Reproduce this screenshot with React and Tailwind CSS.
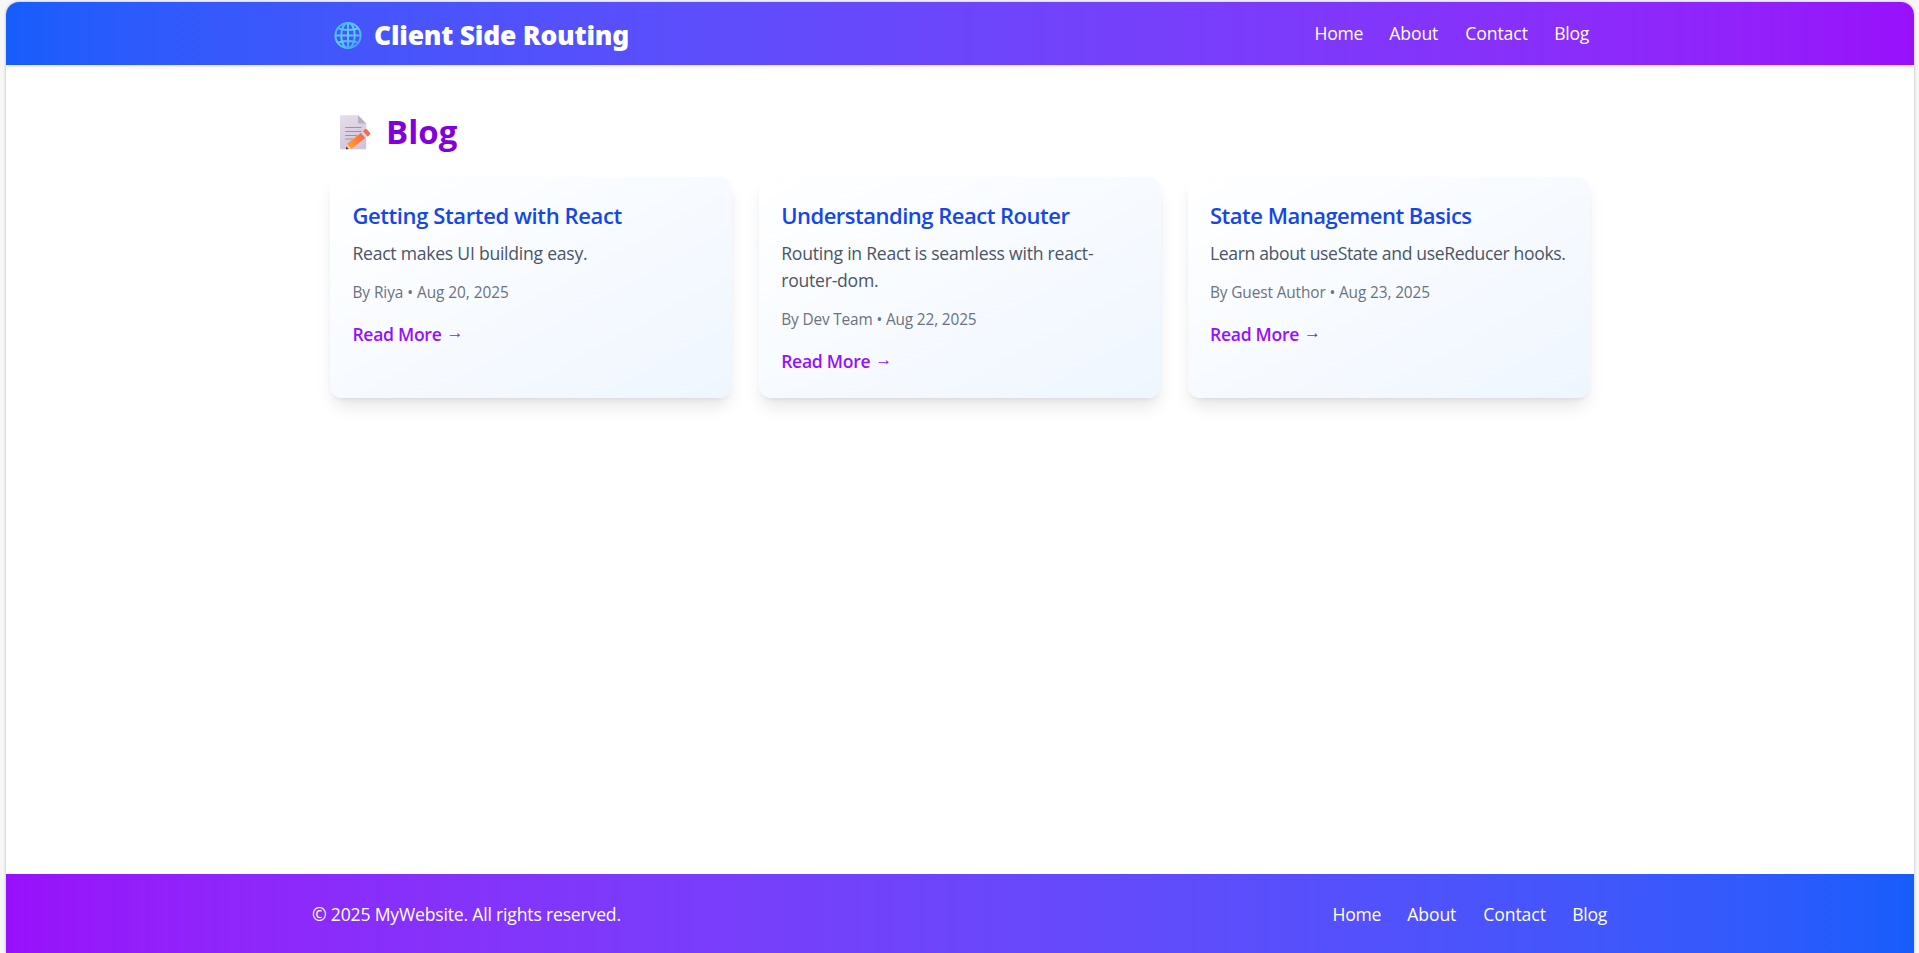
const posts = [
  {
    title: "Getting Started with React",
    titleClass: "tracking-[-0.39px]",
    text: "React makes UI building easy.",
    textClass: "tracking-[-0.25px]",
    meta: "By Riya • Aug 20, 2025",
    metaClass: "tracking-[-0.05px]",
  },
  {
    title: "Understanding React Router",
    titleClass: "tracking-[-0.5px]",
    text: "Routing in React is seamless with react-router-dom.",
    textClass: "tracking-[-0.24px]",
    meta: "By Dev Team • Aug 22, 2025",
    metaClass: "tracking-[-0.15px]",
  },
  {
    title: "State Management Basics",
    titleClass: "tracking-[-0.5px]",
    text: "Learn about useState and useReducer hooks.",
    textClass: "tracking-[-0.37px]",
    meta: "By Guest Author • Aug 23, 2025",
    metaClass: "tracking-[-0.12px]",
  },
];

function GlobeIcon() {
  return (
    <svg className="h-7 w-7 shrink-0" viewBox="0 0 28 28" fill="none">
      <defs>
        <linearGradient id="globe" x1="4" y1="3" x2="22" y2="25" gradientUnits="userSpaceOnUse">
          <stop stopColor="#45b5f5" />
          <stop offset="0.5" stopColor="#5fd0ff" />
          <stop offset="1" stopColor="#3fa4e8" />
        </linearGradient>
      </defs>
      <g stroke="url(#globe)" strokeWidth="2">
        <circle cx="14" cy="13.5" r="12.6" />
        <ellipse cx="14" cy="13.5" rx="6.8" ry="12.6" />
        <path d="M14.01 1 14 26M1.2 13.49 26.8 13.5M4 6.4c5.4 2 14.6 2 20 0M4 20.6c5.4-2 14.6-2 20 0" />
      </g>
    </svg>
  );
}

function MemoIcon() {
  return (
    <svg className="h-[35px] w-[31px] shrink-0" viewBox="0 0 31 35" fill="none">
      <defs>
        <linearGradient id="sheet" x1="4" y1="0" x2="22" y2="34" gradientUnits="userSpaceOnUse">
          <stop stopColor="#e5dcea" />
          <stop offset="1" stopColor="#cfc3d8" />
        </linearGradient>
        <linearGradient id="pencil" x1="9" y1="26" x2="24" y2="22" gradientUnits="userSpaceOnUse">
          <stop stopColor="#ff9838" />
          <stop offset="1" stopColor="#f8693c" />
        </linearGradient>
      </defs>
      <path d="M1.5 .3H18L26.2 8.5V32.7Q26.2 34.2 24.7 34.2H1.5Q0 34.2 0 32.7V1.8Q0 .3 1.5 .3Z" fill="url(#sheet)" />
      <path d="M18 .3 26.2 8.5H19.5Q18 8.5 18 7Z" fill="#baaec2" />
      <path d="M5.3 12.5H21.5M5.3 16.5H21.5M5.3 20.5H17M5.3 24H13" stroke="#9b93a2" strokeWidth="1.2" />
      <path d="M7 28.7 21.5 17.5 25.8 22.6 11.5 33.7 6.5 34Z" fill="url(#pencil)" />
      <path d="M7 28.7 11.5 33.7 6 34.3Z" fill="#f1c9a2" />
      <path d="M6.4 31.5 8.5 34 6 34.3Z" fill="#4a2038" />
      <path d="M21 18 23.5 15.9 27.8 21 25.3 23.1Z" fill="#ddd0ea" />
      <path d="M23 16.3 24.9 14.3Q26 13.2 27.1 14.4L29.9 17.7Q30.8 18.8 29.8 19.8L27.6 21.4Z" fill="#f8694f" />
    </svg>
  );
}

function NavLinks() {
  return (
    <ul className="flex text-[17.6px] leading-[26px] text-white">
      <li className="w-[74.7px] tracking-[-0.25px]"><a href="#home">Home</a></li>
      <li className="w-[76px] tracking-[-0.1px]"><a href="#about">About</a></li>
      <li className="w-[89px] tracking-[-0.08px]"><a href="#contact">Contact</a></li>
      <li className="w-[35.8px] tracking-[-0.3px]"><a href="#blog">Blog</a></li>
    </ul>
  );
}

function PostCard({ post }) {
  return (
    <article className="rounded-[13px] bg-linear-to-br from-white to-blue-50 px-[22.4px] pt-[23px] shadow-[0_11px_16.5px_-3.3px_rgb(0_0_0/0.1),0_4.4px_6.6px_-4.4px_rgb(0_0_0/0.1)]">
      <h2 className={`text-[22px] leading-[31px] font-semibold whitespace-nowrap text-blue-700 ${post.titleClass}`}>{post.title}</h2>
      <p className={`mt-[9px] text-[17.6px] leading-[27px] text-gray-600 ${post.textClass}`}>{post.text}</p>
      <p className={`mt-[15px] text-[15.4px] leading-[22px] text-gray-500 ${post.metaClass}`}>{post.meta}</p>
      <a href="#post" className="mt-[17px] flex gap-[5px] text-[17.6px] leading-[27px] font-semibold tracking-[-0.3px] text-purple-600">
        Read More
        <span className="font-['Liberation_Sans'] text-[17px] leading-[24px] font-normal">→</span>
      </a>
    </article>
  );
}

export default function App() {
  return (
    <div className="h-[953px] overflow-hidden bg-[#f7f7f7] pt-0.5 pr-[5px] pl-1.5 font-['Open_Sans','Noto_Sans',sans-serif]">
      <div className="flex h-[951px] flex-col overflow-hidden rounded-t-[13px] bg-white shadow-[0_0_3px_rgb(0_0_0/0.3)]">
        <header className="h-[63px] shrink-0 bg-linear-to-r from-blue-600 to-purple-600 shadow-[0_1px_4px_rgb(0_0_0/0.14)]">
          <div className="mx-auto flex h-full w-[1260px] justify-between">
            <div className="flex items-start gap-3 pt-5 pl-1">
              <GlobeIcon />
              <h1 className="-mt-[5px] font-['Noto_Sans'] text-[26.4px] leading-9 font-black tracking-[-0.2px] whitespace-nowrap text-white">
                Client Side Routing
              </h1>
            </div>
            <nav className="pt-[18px]"><NavLinks /></nav>
          </div>
        </header>
        <main className="mx-auto w-[1260px] grow">
          <div className="flex h-[112px] items-start gap-[15px] pt-[50px] pl-[10px]">
            <MemoIcon />
            <h1 className="-mt-[3px] text-[33px] leading-10 font-bold text-purple-700">Blog</h1>
          </div>
          <div className="grid h-[221px] grid-cols-3 gap-[26.4px]">
            {posts.map((post) => (
              <PostCard key={post.title} post={post} />
            ))}
          </div>
        </main>
        <footer className="h-[79px] shrink-0 bg-linear-to-r from-purple-600 to-blue-600">
          <div className="mx-auto flex w-[1296px] justify-between pt-[27px]">
            <p className="text-[17.6px] leading-[26px] tracking-[-0.19px] text-white">© 2025 MyWebsite. All rights reserved.</p>
            <nav><NavLinks /></nav>
          </div>
        </footer>
      </div>
    </div>
  );
}
